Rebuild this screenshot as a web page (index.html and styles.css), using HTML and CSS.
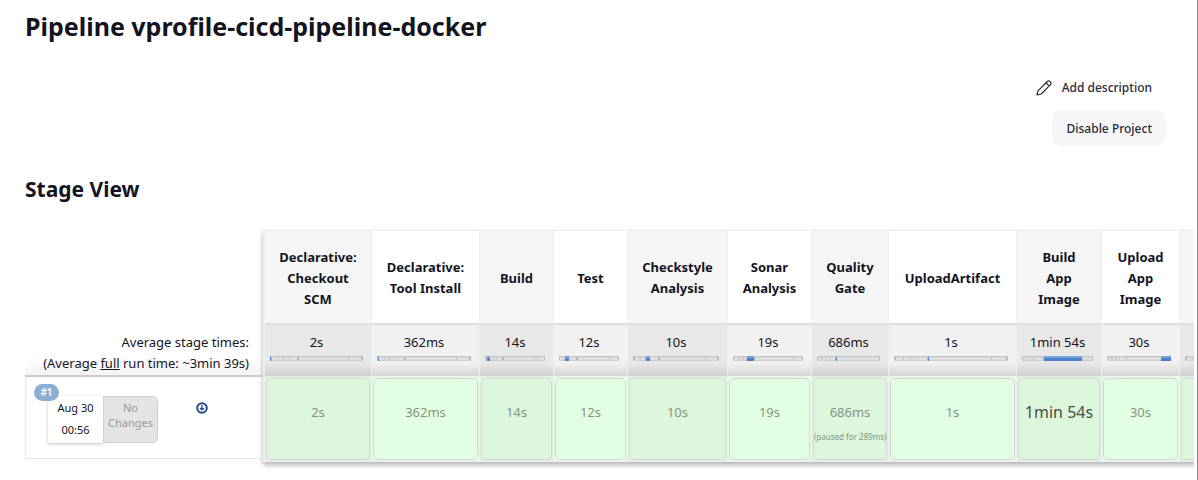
FILE: index.html
```
<!DOCTYPE html>
<html lang="en">
<head>
<meta charset="utf-8">
<title>vprofile-cicd-pipeline-docker</title>
<link rel="stylesheet" href="styles.css">
</head>
<body>
<main class="page">
  <h1 class="title">Pipeline vprofile-cicd-pipeline-docker</h1>
  <div class="actions">
    <a class="describe" href="#description">
      <svg class="pencil" viewBox="0 0 16 16" aria-hidden="true"><path d="M1 15l1-4.200L11.300 1.500Q12.600.400 13.900 1.500L14.500 2.100Q15.600 3.400 14.500 4.700L5.200 14 1 15zM10 2.800l3.200 3.200"/></svg>
      Add description
    </a>
    <button class="disable" type="button">Disable Project</button>
  </div>
  <h2 class="heading">Stage View</h2>
  <section class="stage-view">
    <div class="runs">
      <div class="averages">Average stage times:<br>(Average <u>full</u> run time: ~3min 39s)</div>
      <div class="run">
        <a class="badge" href="#run-1">#1</a>
        <div class="stamp"><span>Aug 30</span><span>00:56</span></div>
        <div class="changes">No Changes</div>
        <a class="artifacts" href="#artifacts" aria-label="Download artifacts">
          <svg viewBox="0 0 12 12" aria-hidden="true"><circle cx="6" cy="6" r="4.800"/><path d="M6 3v5M4 6l2 2 2-2"/></svg>
        </a>
      </div>
    </div>
    <table class="stages">
      <colgroup>
        <col class="w107"><col class="w108"><col class="w74"><col class="w74"><col class="w100"><col class="w84"><col class="w77"><col class="w128"><col class="w85"><col class="w78"><col class="w107">
      </colgroup>
      <thead>
        <tr class="names">
          <th>Declarative: Checkout SCM</th><th>Declarative: Tool Install</th><th>Build</th><th>Test</th><th>Checkstyle Analysis</th><th>Sonar Analysis</th><th>Quality Gate</th><th>UploadArtifact</th><th>Build App Image</th><th>Upload App Image</th><th></th>
        </tr>
      </thead>
      <tbody>
        <tr class="times">
          <td>2s<div class="bar"><i style="margin-left:0%;width:1%"></i></div></td>
          <td>362ms<div class="bar"><i style="margin-left:1%;width:1%"></i></div></td>
          <td>14s<div class="bar"><i style="margin-left:3%;width:6%"></i></div></td>
          <td>12s<div class="bar"><i style="margin-left:10%;width:6%"></i></div></td>
          <td>10s<div class="bar"><i style="margin-left:15%;width:5%"></i></div></td>
          <td>19s<div class="bar"><i style="margin-left:20%;width:10%"></i></div></td>
          <td>686ms<div class="bar"><i style="margin-left:30%;width:1%"></i></div></td>
          <td>1s<div class="bar"><i style="margin-left:30%;width:1%"></i></div></td>
          <td>1min 54s<div class="bar"><i style="margin-left:31%;width:54%"></i></div></td>
          <td>30s<div class="bar"><i style="margin-left:85%;width:15%"></i></div></td>
          <td>&nbsp;<div class="bar"></div></td>
        </tr>
        <tr class="results">
          <td><div class="cell">2s</div></td>
          <td><div class="cell">362ms</div></td>
          <td><div class="cell">14s</div></td>
          <td><div class="cell">12s</div></td>
          <td><div class="cell">10s</div></td>
          <td><div class="cell">19s</div></td>
          <td><div class="cell">686ms<small>(paused for 289ms)</small></div></td>
          <td><div class="cell">1s</div></td>
          <td><div class="cell long">1min 54s</div></td>
          <td><div class="cell">30s</div></td>
          <td><div class="cell"></div></td>
        </tr>
      </tbody>
    </table>
  </section>
</main>
</body>
</html>
```
FILE: styles.css
```
* { box-sizing: border-box; }
body {
  margin: 0;
  background: #fff;
  color: #14141f;
  font: 13px/21px "Noto Sans", "Open Sans", sans-serif;
}
.page {
  min-height: 100vh;
  padding: 10px 3px 0 25px;
  border-right: 1px solid #88888c;
  overflow: hidden;
}
.title, .heading { margin: 0; font-weight: 700; }
.title { font-size: 25px; line-height: 32px; }
.actions {
  display: flex;
  flex-direction: column;
  align-items: flex-end;
  gap: 5px;
  margin-top: 27px;
  padding-right: 28px;
}
.describe, .disable {
  display: flex;
  align-items: center;
  height: 36px;
  padding: 2px 14px 0;
  border: 0;
  border-radius: 10px;
  color: #2a2a38;
  font: 500 12px/20px "Noto Sans", "Open Sans", sans-serif;
  text-decoration: none;
}
.describe { gap: 10px; }
.disable { background: #f6f6f9; }
.pencil { width: 16px; height: 16px; fill: none; stroke: #2a2a38; stroke-width: 1.2; stroke-linejoin: round; }
.heading { margin-top: 29px; font-size: 21px; line-height: 28px; }
.stage-view {
  display: flex;
  align-items: flex-start;
  margin-top: 20px;
  padding: 7px 0 14px;
  overflow: hidden;
}
.runs { flex: 0 0 238px; margin-top: 93px; }
.averages {
  height: 52px;
  padding: 9px 14px 0 0;
  background: linear-gradient(#fff 65%, #f4f4f4);
  text-align: right;
  white-space: nowrap;
}
.run {
  position: relative;
  display: flex;
  align-items: flex-start;
  height: 84px;
  padding: 19px 0 0 22px;
  border: 1px solid #e8e8ea;
  border-width: 2px 0 1px 1px;
  border-top-color: #ccc;
}
.badge {
  position: absolute;
  left: 8px;
  top: 7px;
  width: 25px;
  padding-bottom: 1px;
  border-radius: 9px;
  background: #8aaed6;
  color: #fff;
  font-size: 10px;
  font-weight: 600;
  line-height: 16px;
  text-align: center;
  text-decoration: none;
}
.stamp {
  display: flex;
  flex-direction: column;
  width: 55px;
  height: 47px;
  padding-top: 1px;
  box-shadow: 0 1px 3px rgba(0, 0, 0, .25);
  font-size: 11px;
  line-height: 22px;
  text-align: center;
}
.changes {
  width: 55px;
  height: 47px;
  padding-top: 3px;
  border: 1px solid #d0d0d0;
  border-radius: 0 5px 5px 0;
  background: #e4e4e4;
  color: #999;
  font-size: 11px;
  line-height: 15px;
  text-align: center;
}
.artifacts { margin: 6px 0 0 38px; line-height: 0; }
.artifacts svg { width: 12px; height: 12px; fill: none; stroke: #204a87; stroke-width: 2; }
.artifacts path { stroke-width: 1.2; }
.stages {
  flex: none;
  width: 1024px;
  table-layout: fixed;
  border-collapse: separate;
  border-spacing: 0;
  border: 1px solid #eee;
  border-width: 1px 0 1px 2px;
  box-shadow: 0 3px 5px rgba(0, 0, 0, .3);
  text-align: center;
}
.w74 { width: 74px; }
.w77 { width: 77px; }
.w78 { width: 78px; }
.w84 { width: 84px; }
.w85 { width: 85px; }
.w100 { width: 100px; }
.w107 { width: 107px; }
.w108 { width: 108px; }
.w128 { width: 128px; }
.stages th, .stages td { border-right: 1px solid #eee; background: #fff; }
.stages th {
  height: 92px;
  padding: 2px 12px 0;
  font-weight: 700;
  vertical-align: middle;
}
.stages th:nth-child(odd) { background: #f6f6f6; }
.stages .times td {
  height: 53px;
  padding: 7px 8px 0 5px;
  border-top: 2px solid #e0e0e0;
  background: linear-gradient(#f1f1f1 75%, #d4d4d4);
  vertical-align: top;
  white-space: nowrap;
}
.stages .times td:nth-child(odd) { background: linear-gradient(#e8e8e8 75%, #cecece); }
.bar {
  height: 5px;
  margin-top: 3px;
  background: linear-gradient(90deg, #bbb 2%, #dedede 2% 7%, #ccc 7% 9%, #dedede 9% 13%, #ccc 13% 15%, #dedede 15% 19%, #ccc 19% 20%, #dedede 20% 29%, #b6b6b6 29% 31%, #dedede 31% 84%, #ccc 84% 86%, #dedede 86% 98%, #bbb 98%);
  box-shadow: inset 0 1px #c2c2c2, inset 0 -1px #cdcdcd;
}
.bar i { display: block; min-width: 1px; height: 5px; background: linear-gradient(#78a3d6 50%, #4a81cf 50%); }
.stages .results td { height: 85px; padding: 2px 1px 1px; background: #eaf6ea; }
.stages .results td:nth-child(odd) { background: #e2eee2; }
.cell {
  display: flex;
  flex-direction: column;
  height: 82px;
  padding-top: 23px;
  border: 1px solid #d0dad0;
  border-radius: 5px;
  background: #e3ffe3;
  color: #829582;
  white-space: nowrap;
}
.stages td:nth-child(odd) .cell { background: #ddf7dd; }
.cell small { margin-top: 5px; font-size: 8px; line-height: 18px; }
.stages .long { color: #465046; font-size: 16px; }
```
